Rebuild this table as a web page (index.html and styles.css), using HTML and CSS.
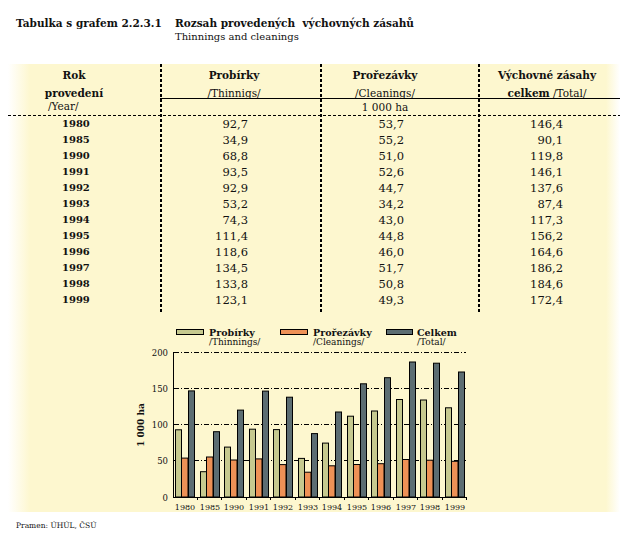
FILE: index.html
```html
<!DOCTYPE html>
<html lang="cs">
<head>
<meta charset="utf-8">
<title>Tabulka s grafem 2.2.3.1</title>
<link rel="stylesheet" href="styles.css">
</head>
<body>
<header class="title">
  <div class="title-label">Tabulka s grafem 2.2.3.1</div>
  <div class="title-main">
    <div class="title-cz">Rozsah provedených&nbsp; výchovných zásahů</div>
    <div class="title-en">Thinnings and cleanings</div>
  </div>
</header>

<section class="panel">
  <div class="table">
    <div class="thead">
      <div class="th r1 c1"><b>Rok</b><b>provedení</b></div>
      <div class="th r1 c2"><b>Probírky</b><span>/Thinnigs/</span></div>
      <div class="th r1 c3"><b>Prořezávky</b><span>/Cleanings/</span></div>
      <div class="th r1 c4"><b>Výchovné zásahy</b><span><b>celkem</b> /Total/</span></div>
      <div class="th r2 c1 year-label">/Year/</div>
      <div class="th r2 c2 ruled"></div>
      <div class="th r2 c3 ruled">1 000 ha</div>
      <div class="th r2 c4 ruled"></div>
    </div>
    <div class="tbody">
      <div class="tr"><b class="yr">1980</b><span class="v2">92,7</span><span class="v3">53,7</span><span class="v4">146,4</span></div>
      <div class="tr"><b class="yr">1985</b><span class="v2">34,9</span><span class="v3">55,2</span><span class="v4">90,1</span></div>
      <div class="tr"><b class="yr">1990</b><span class="v2">68,8</span><span class="v3">51,0</span><span class="v4">119,8</span></div>
      <div class="tr"><b class="yr">1991</b><span class="v2">93,5</span><span class="v3">52,6</span><span class="v4">146,1</span></div>
      <div class="tr"><b class="yr">1992</b><span class="v2">92,9</span><span class="v3">44,7</span><span class="v4">137,6</span></div>
      <div class="tr"><b class="yr">1993</b><span class="v2">53,2</span><span class="v3">34,2</span><span class="v4">87,4</span></div>
      <div class="tr"><b class="yr">1994</b><span class="v2">74,3</span><span class="v3">43,0</span><span class="v4">117,3</span></div>
      <div class="tr"><b class="yr">1995</b><span class="v2">111,4</span><span class="v3">44,8</span><span class="v4">156,2</span></div>
      <div class="tr"><b class="yr">1996</b><span class="v2">118,6</span><span class="v3">46,0</span><span class="v4">164,6</span></div>
      <div class="tr"><b class="yr">1997</b><span class="v2">134,5</span><span class="v3">51,7</span><span class="v4">186,2</span></div>
      <div class="tr"><b class="yr">1998</b><span class="v2">133,8</span><span class="v3">50,8</span><span class="v4">184,6</span></div>
      <div class="tr"><b class="yr">1999</b><span class="v2">123,1</span><span class="v3">49,3</span><span class="v4">172,4</span></div>
    </div>
  </div>

  <svg class="chart" width="350" height="200" viewBox="0 0 350 200" xmlns="http://www.w3.org/2000/svg">
    <!-- legend -->
    <g class="legend">
      <rect class="bp" x="46.5" y="17.5" width="27" height="5"/>
      <text class="lg-b" x="79" y="23.5">Probírky</text>
      <text class="lg-r" x="79" y="32.5">/Thinnings/</text>
      <rect class="bc" x="150.5" y="17.5" width="27" height="5"/>
      <text class="lg-b" x="183" y="23.5">Prořezávky</text>
      <text class="lg-r" x="183" y="32.5">/Cleanings/</text>
      <rect class="bt" x="256.5" y="17.5" width="26" height="5"/>
      <text class="lg-b" x="287" y="23.5">Celkem</text>
      <text class="lg-r" x="287" y="32.5">/Total/</text>
    </g>
    <!-- grid -->
    <g class="grid">
      <line x1="44" y1="40.5" x2="336" y2="40.5"/>
      <line x1="44" y1="76.5" x2="336" y2="76.5"/>
      <line x1="44" y1="112.5" x2="336" y2="112.5"/>
      <line x1="44" y1="148.5" x2="336" y2="148.5"/>
    </g>
    <g class="ylab">
      <text x="38" y="43.5">200</text>
      <text x="38" y="79.5">150</text>
      <text x="38" y="116">100</text>
      <text x="38" y="152">50</text>
      <text x="38" y="188.5">0</text>
    </g>
    <text class="yunit" transform="translate(14 113) rotate(-90)">1 000 ha</text>
    <!-- bars -->
    <g class="bars">
      <g transform="translate(45 0)"><rect class="bp" x="0.5" y="117.8" width="6" height="67.2"/><rect class="bc" x="6.5" y="146.1" width="6.5" height="38.9"/><rect class="bt" x="13.5" y="78.9" width="6" height="106.1"/><text x="10" y="197.5">1980</text></g>
      <g transform="translate(70 0)"><rect class="bp" x="0.5" y="159.7" width="6" height="25.3"/><rect class="bc" x="6.5" y="145.0" width="6.5" height="40.0"/><rect class="bt" x="13.5" y="119.7" width="6" height="65.3"/><text x="10" y="197.5">1985</text></g>
      <g transform="translate(94 0)"><rect class="bp" x="0.5" y="135.1" width="6" height="49.9"/><rect class="bc" x="6.5" y="148.0" width="6.5" height="37.0"/><rect class="bt" x="13.5" y="98.1" width="6" height="86.9"/><text x="10" y="197.5">1990</text></g>
      <g transform="translate(119 0)"><rect class="bp" x="0.5" y="117.2" width="6" height="67.8"/><rect class="bc" x="6.5" y="146.9" width="6.5" height="38.1"/><rect class="bt" x="13.5" y="79.1" width="6" height="105.9"/><text x="10" y="197.5">1991</text></g>
      <g transform="translate(143 0)"><rect class="bp" x="0.5" y="117.6" width="6" height="67.4"/><rect class="bc" x="6.5" y="152.6" width="6.5" height="32.4"/><rect class="bt" x="13.5" y="85.2" width="6" height="99.8"/><text x="10" y="197.5">1992</text></g>
      <g transform="translate(168 0)"><rect class="bp" x="0.5" y="146.4" width="6" height="38.6"/><rect class="bc" x="6.5" y="160.2" width="6.5" height="24.8"/><rect class="bt" x="13.5" y="121.6" width="6" height="63.4"/><text x="10" y="197.5">1993</text></g>
      <g transform="translate(192 0)"><rect class="bp" x="0.5" y="131.1" width="6" height="53.9"/><rect class="bc" x="6.5" y="153.8" width="6.5" height="31.2"/><rect class="bt" x="13.5" y="100.0" width="6" height="85.0"/><text x="10" y="197.5">1994</text></g>
      <g transform="translate(217 0)"><rect class="bp" x="0.5" y="104.2" width="6" height="80.8"/><rect class="bc" x="6.5" y="152.5" width="6.5" height="32.5"/><rect class="bt" x="13.5" y="71.8" width="6" height="113.2"/><text x="10" y="197.5">1995</text></g>
      <g transform="translate(241 0)"><rect class="bp" x="0.5" y="99.0" width="6" height="86.0"/><rect class="bc" x="6.5" y="151.7" width="6.5" height="33.3"/><rect class="bt" x="13.5" y="65.7" width="6" height="119.3"/><text x="10" y="197.5">1996</text></g>
      <g transform="translate(266 0)"><rect class="bp" x="0.5" y="87.5" width="6" height="97.5"/><rect class="bc" x="6.5" y="147.5" width="6.5" height="37.5"/><rect class="bt" x="13.5" y="50.0" width="6" height="135.0"/><text x="10" y="197.5">1997</text></g>
      <g transform="translate(290 0)"><rect class="bp" x="0.5" y="88.0" width="6" height="97.0"/><rect class="bc" x="6.5" y="148.2" width="6.5" height="36.8"/><rect class="bt" x="13.5" y="51.2" width="6" height="133.8"/><text x="10" y="197.5">1998</text></g>
      <g transform="translate(315 0)"><rect class="bp" x="0.5" y="95.8" width="6" height="89.2"/><rect class="bc" x="6.5" y="149.3" width="6.5" height="35.7"/><rect class="bt" x="13.5" y="60.0" width="6" height="125.0"/><text x="10" y="197.5">1999</text></g>
    </g>
    <!-- axes -->
    <g class="axis">
      <line x1="43.5" y1="40" x2="43.5" y2="185.5"/>
      <line x1="43" y1="185.5" x2="337" y2="185.5"/>
      <line x1="67.5" y1="185" x2="67.5" y2="188"/>
      <line x1="91.5" y1="185" x2="91.5" y2="188"/>
      <line x1="116.5" y1="185" x2="116.5" y2="188"/>
      <line x1="140.5" y1="185" x2="140.5" y2="188"/>
      <line x1="165.5" y1="185" x2="165.5" y2="188"/>
      <line x1="189.5" y1="185" x2="189.5" y2="188"/>
      <line x1="214.5" y1="185" x2="214.5" y2="188"/>
      <line x1="238.5" y1="185" x2="238.5" y2="188"/>
      <line x1="263.5" y1="185" x2="263.5" y2="188"/>
      <line x1="287.5" y1="185" x2="287.5" y2="188"/>
      <line x1="312.5" y1="185" x2="312.5" y2="188"/>
      <line x1="336.5" y1="185" x2="336.5" y2="188"/>
    </g>
  </svg>
</section>

<footer class="source">Pramen: ÚHÚL, ČSÚ</footer>
</body>
</html>
```

FILE: styles.css
```css
* {
  box-sizing: border-box;
  margin: 0;
  padding: 0;
}

body {
  width: 624px;
  height: 544px;
  overflow: hidden;
  background: #fff;
  color: #111;
  font-family: "DejaVu Serif", serif;
}

/* ---------- title ---------- */
.title {
  display: flex;
  padding: 16px 0 0 16px;
  line-height: 14px;
}

.title-label {
  flex: 0 0 159px;
  font-weight: bold;
  font-size: 10.5px;
}

.title-cz {
  font-weight: bold;
  font-size: 10.5px;
}

.title-en {
  font-size: 10px;
}

/* ---------- panel ---------- */
.panel {
  margin: 20px 4px 0 8px;
  height: 448px;
  background: linear-gradient(to right, #fff 0, #fdf7cf 22px, #fdf7cf calc(100% - 14px), #fff 100%);
}

.table {
  height: 248px;
  background:
    repeating-linear-gradient(to bottom, #000 0 3px, transparent 3px 5px) 152px 0 / 2px 100% no-repeat,
    repeating-linear-gradient(to bottom, #000 0 3px, transparent 3px 5px) 312px 0 / 2px 100% no-repeat,
    repeating-linear-gradient(to bottom, #000 0 3px, transparent 3px 5px) 470px 0 / 2px 100% no-repeat;
}

.thead {
  display: grid;
  grid-template-columns: 152px 160px 158px 142px;
  grid-template-rows: 34px 17px;
  font-size: 10.5px;
}

.th {
  text-align: center;
}

.r1 {
  display: flex;
  flex-direction: column;
  align-items: center;
  padding-top: 2px;
  line-height: 18px;
}

.r2 {
  line-height: 16px;
}

.c1 { padding-right: 20px; }
.c2 { padding-right: 12px; }
.c3 { padding-right: 28px; }
.c4 { padding-right: 4px; }

.year-label {
  text-align: left;
  padding-left: 40px;
}

.ruled {
  border-top: 1px solid #000;
}

.tbody {
  padding-top: 1px;
  background: repeating-linear-gradient(to right, #000 0 3px, transparent 3px 5px) 0 0 / 100% 1px no-repeat;
}

.tr {
  display: grid;
  grid-template-columns: 152px 160px 158px 142px;
  height: 16px;
  line-height: 16px;
  font-size: 11.5px;
}

.yr {
  font-size: 10px;
  padding-left: 54px;
}

.v2, .v3, .v4 {
  text-align: right;
}

.v2 { padding-right: 72px; }
.v3 { padding-right: 74px; }
.v4 { padding-right: 57px; }

/* ---------- chart ---------- */
.chart {
  display: block;
  margin-left: 122px;
  font-family: "DejaVu Serif", serif;
}

.bp { fill: #c6c98f; stroke: #000; stroke-width: 1; }
.bc { fill: #ee9156; stroke: #000; stroke-width: 1; }
.bt { fill: #5c6d72; stroke: #000; stroke-width: 1; }

.lg-b {
  font-size: 9.5px;
  font-weight: bold;
  fill: #111;
}

.lg-r {
  font-size: 9px;
  fill: #111;
}

.grid line {
  stroke: #000;
  stroke-width: 1;
  stroke-dasharray: 5 2 1 2;
}

.ylab text {
  font-size: 8.5px;
  text-anchor: end;
  fill: #111;
}

.yunit {
  font-size: 9px;
  font-weight: bold;
  text-anchor: middle;
  fill: #111;
}

.bars text {
  font-size: 8px;
  text-anchor: middle;
  fill: #111;
}

.axis line {
  stroke: #000;
  stroke-width: 1;
}

/* ---------- source ---------- */
.source {
  padding: 9px 0 0 16px;
  font-size: 7.5px;
  line-height: 10px;
}
```
